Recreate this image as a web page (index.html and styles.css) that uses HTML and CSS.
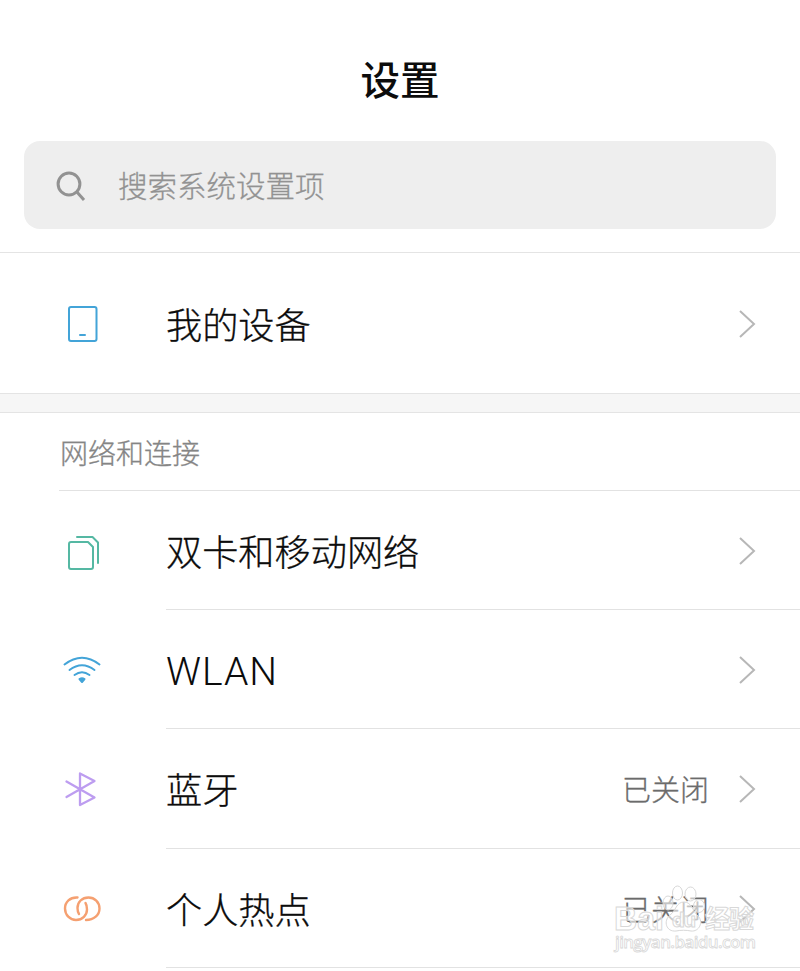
FILE: index.html
```html
<!DOCTYPE html>
<html lang="zh-CN">
<head>
    <meta charset="UTF-8">
    <title>设置</title>
    <link rel="stylesheet" href="styles.css">
</head>
<body>
    <h1 class="title">设置</h1>

    <div class="search">
        <svg class="search-icon" width="32" height="32" viewBox="0 0 32 32">
            <circle cx="14" cy="15" r="10.9"/>
            <path d="M21.500 22.500L29 31"/>
        </svg>
        <span>搜索系统设置项</span>
    </div>

    <div class="row device">
        <svg class="icon blue" width="44" height="44" viewBox="0 0 44 44">
            <rect x="9" y="6" width="27.500" height="34" rx="2"/>
            <path d="M20 34h5"/>
        </svg>
        <div class="content">
            <span class="label">我的设备</span>
            <svg class="arrow" width="20" height="32" viewBox="0 0 20 32"><path d="M2 4L16 17L2 30"/></svg>
        </div>
    </div>

    <div class="gap"></div>

    <h2 class="section">网络和连接</h2>

    <div class="row">
        <svg class="icon green" width="44" height="44" viewBox="0 0 44 44">
            <path d="M11 13H28L33 18V38a2 2 0 0 1-2 2H11a2 2 0 0 1-2-2V15a2 2 0 0 1 2-2z"/>
            <path d="M17 8H32.500L38 13.500V34"/>
        </svg>
        <div class="content">
            <span class="label">双卡和移动网络</span>
            <svg class="arrow" width="20" height="32" viewBox="0 0 20 32"><path d="M2 4L16 17L2 30"/></svg>
        </div>
    </div>

    <div class="row">
        <svg class="icon blue" width="44" height="44" viewBox="0 0 44 44">
            <path d="M4.500 16.500Q22 3 39.500 16.500M9.500 22Q22 12.500 34.500 22M14.500 27Q22 21.500 29.500 27"/>
            <path class="solid" d="M19.500 31Q22 29.500 24.500 31L22 34z"/>
        </svg>
        <div class="content">
            <span class="label wlan">WLAN</span>
            <svg class="arrow" width="20" height="32" viewBox="0 0 20 32"><path d="M2 4L16 17L2 30"/></svg>
        </div>
    </div>

    <div class="row">
        <svg class="icon purple" width="44" height="44" viewBox="0 0 44 44">
            <path d="M6.500 14.500L34.500 30.500L20 38V6.500L34.500 14L6.500 30"/>
        </svg>
        <div class="content">
            <span class="label">蓝牙</span>
            <span class="value">已关闭</span>
            <svg class="arrow" width="20" height="32" viewBox="0 0 20 32"><path d="M2 4L16 17L2 30"/></svg>
        </div>
    </div>

    <div class="row">
        <svg class="icon orange" width="44" height="44" viewBox="0 0 44 44">
            <path d="M17.500 11.500C10 11 5 16 5 22.500C5 29 10 34 16 34C22.500 34 27 29 27 23.500C27 20.500 26.500 18.500 25.500 17"/>
            <path d="M26 34C34 34 39.500 29 39.500 22.500C39.500 16 34.500 11.500 28.500 11.500C22 11.500 17.500 16 17.500 22C17.500 25 18 26.500 19 28"/>
        </svg>
        <div class="content">
            <span class="label">个人热点</span>
            <span class="value">已关闭</span>
            <svg class="arrow" width="20" height="32" viewBox="0 0 20 32"><path d="M2 4L16 17L2 30"/></svg>
        </div>
    </div>

    <!-- watermark over the last row -->
    <svg class="watermark" width="160" height="80" viewBox="0 0 160 80">
        <g class="paw">
            <ellipse cx="56" cy="21" rx="5" ry="7"/>
            <ellipse cx="65.500" cy="11" rx="5" ry="7"/>
            <ellipse cx="78.500" cy="12" rx="5.500" ry="7"/>
            <ellipse cx="87" cy="24" rx="5.500" ry="6.500"/>
            <path d="M72 20C80 20 81 30 86 34C92 40 87 50 79 49C74 48 69 48 64 49C54 50 51 39 58 33C64 29 64 20 72 20z"/>
        </g>
        <text class="mark" x="2" y="48" textLength="50" lengthAdjust="spacingAndGlyphs">Bai</text>
        <text class="mark du" x="60" y="45" textLength="24">du</text>
        <text class="mark cn" x="93" y="46" textLength="49">经验</text>
        <text class="site" x="3" y="66" textLength="141">jingyan.baidu.com</text>
    </svg>
</body>
</html>
```

FILE: styles.css
```css
body {
    margin: 0;
    height: 971px;
    position: relative;
    overflow: hidden;
    background: #fff;
    color: #0c0c0c;
    font-family: "Noto Sans CJK SC", sans-serif;
    font-weight: 300;
    -webkit-text-stroke: 0.3px currentColor;
}

.title {
    margin: 0;
    height: 141px;
    box-sizing: border-box;
    padding-top: 48px;
    text-align: center;
    font-size: 39.5px;
    line-height: 60px;
    font-weight: 500;
    -webkit-text-stroke: 0;
}

.search {
    display: flex;
    align-items: center;
    height: 88px;
    margin: 0 24px 23px;
    padding-left: 31px;
    border-radius: 16px;
    background: #eee;
    color: #929292;
    font-size: 29.5px;
}

.search span {
    margin-top: -2px;
}

.search-icon {
    margin-right: 31px;
    fill: none;
    stroke: #929292;
    stroke-width: 3;
}

.row {
    display: flex;
    align-items: center;
    height: 119.2px;
    padding-left: 60px;
}

.device {
    height: 140px;
    border-top: 1px solid #e4e4e4;
}

.gap {
    height: 18px;
    border-top: 1px solid #e4e4e4;
    border-bottom: 1px solid #e4e4e4;
    background: #f6f6f6;
}

.section {
    height: 77px;
    margin: 0 0 0 59px;
    border-bottom: 1px solid #e2e2e2;
    color: #858585;
    font-size: 28px;
    line-height: 78px;
    font-weight: 300;
    text-indent: 1px;
}

.content {
    flex: 1;
    display: flex;
    align-items: center;
    height: 100%;
    box-sizing: border-box;
    margin-left: 62px;
    padding-right: 42px;
    border-bottom: 1px solid #e2e2e2;
}

.device .content {
    border-bottom: none;
}

.label {
    flex: 1;
    font-size: 36.2px;
}

.wlan {
    padding-top: 5px;
    font-family: Roboto, sans-serif;
    font-size: 39px;
    letter-spacing: 1px;
    -webkit-text-stroke: 0;
}

.value {
    margin-right: 29px;
    color: #6b6b6b;
    font-size: 29px;
}

.icon {
    fill: none;
    stroke: currentColor;
    stroke-width: 2;
    stroke-linecap: round;
    stroke-linejoin: round;
}

.solid {
    fill: currentColor;
}

.blue {
    color: #43a4d8;
}

.green {
    color: #55b8a3;
}

.purple {
    color: #bd9df0;
    stroke-width: 2.3;
}

.orange {
    color: #f5a071;
    stroke-width: 2.4;
}

.arrow {
    fill: none;
    stroke: #b7b7b7;
    stroke-width: 2;
}

.watermark {
    position: absolute;
    left: 612px;
    top: 882px;
    fill: #fff;
    stroke: #d8d8d8;
    stroke-width: 1;
    -webkit-text-stroke: 0;
}

.paw {
    fill-opacity: 0.6;
}

.mark {
    font-family: "Liberation Sans", sans-serif;
    font-size: 34px;
    font-weight: 700;
    fill-opacity: 0.6;
}

.du {
    font-size: 21px;
}

.cn {
    font-family: "Noto Sans CJK SC", sans-serif;
    font-size: 25px;
}

.site {
    font-family: "Open Sans", sans-serif;
    font-size: 17px;
    font-weight: 600;
    stroke-width: 0.8;
}
```
